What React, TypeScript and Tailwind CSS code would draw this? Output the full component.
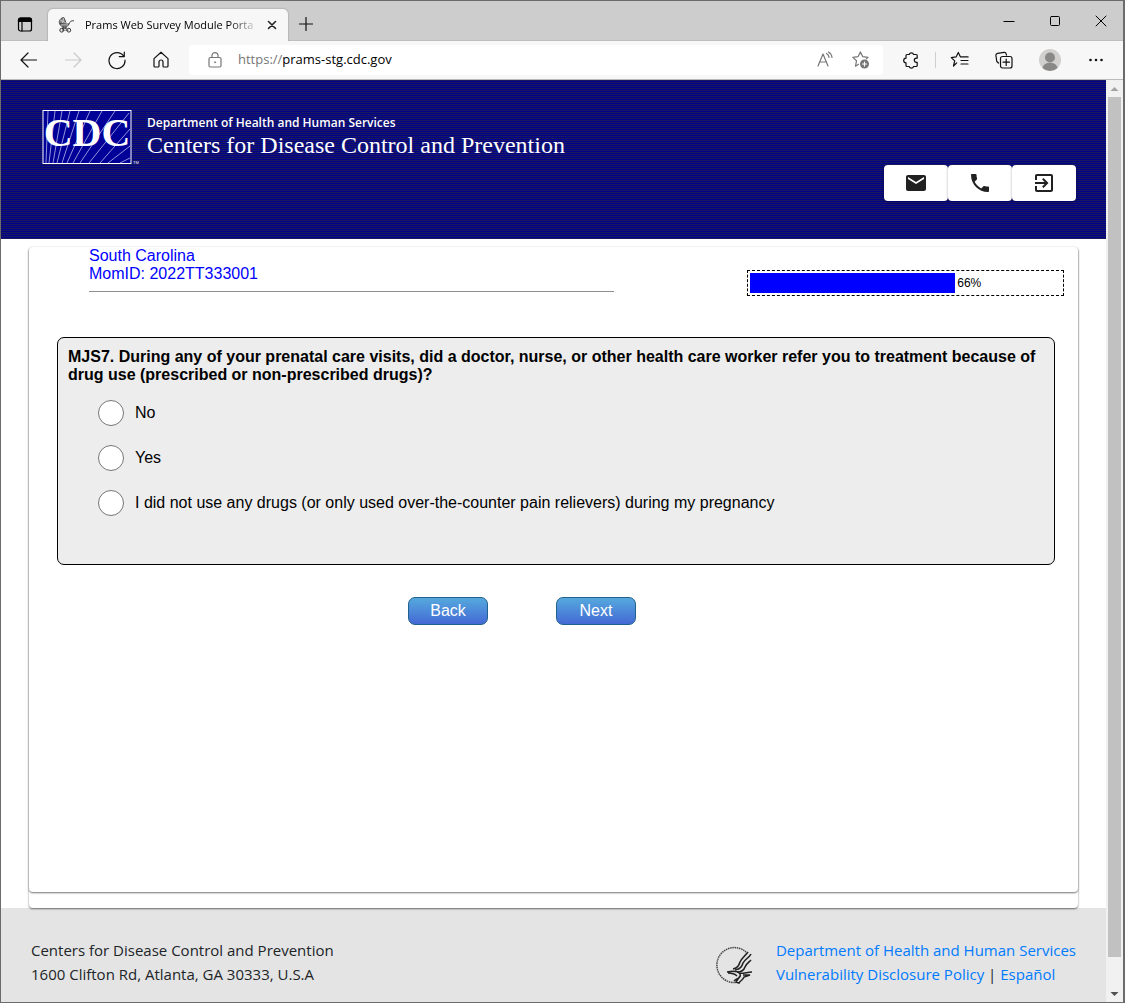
import React from "react";

const ui = 'font-["Open_Sans","Noto_Sans",sans-serif]';
const iconBtn = "flex h-8 w-11 items-center justify-center text-[#111]";

function Svg({ children, size = 20 }: { children: React.ReactNode; size?: number }) {
  return (
    <svg width={size} height={size} viewBox={`0 0 ${size} ${size}`} fill="none" stroke="currentColor" strokeWidth="1.2" strokeLinecap="round" strokeLinejoin="round" aria-hidden="true">
      {children}
    </svg>
  );
}

function TabStrip() {
  return (
    <div className="flex h-10 items-end border-b border-[#bebebe] bg-[#cdcdcd]">
      <button aria-label="Tab actions" className="flex h-8 w-[47px] items-center justify-center">
        <Svg>
          <rect x="3.500" y="4" width="13" height="13" rx="2" />
          <path d="M3.500 7.500V6a2 2 0 0 1 2-2h9a2 2 0 0 1 2 2v1.500z" fill="currentColor" />
          <path d="M7 8v9" />
        </Svg>
      </button>
      <div className="-mb-px flex h-8 w-60 items-center rounded-t-[5px] bg-[#f7f7f7] pl-[10px] shadow-[0_0_2px_rgba(0,0,0,0.35)] [clip-path:inset(-3px_-3px_0_-3px)]">
        <svg width="18" height="18" viewBox="0 0 18 18" fill="none" stroke="#333" aria-hidden="true">
          <path d="M1.500 7.500c-1-3 1.500-6 4.500-6l2 5.500z" fill="#888" strokeWidth=".8" />
          <path d="M6 1.500 4.500 7.200M2 4l6 3" stroke="#eee" strokeWidth=".6" />
          <path d="M1.500 8h9.500c1-2.500 2-3.500 5-3.200M2 8c.5 3.500 8 3.500 9 0M4 11l5 2M9 11l-5 2" strokeWidth=".9" />
          <path d="M2.300 9.500h8.400" stroke="#888" strokeWidth="1.300" />
          <circle cx="3.700" cy="14.200" r="1.900" />
          <circle cx="10.800" cy="14.200" r="1.900" />
          <path d="M3.700 14.200h7" strokeWidth=".7" />
        </svg>
        <span className="ml-[9px] w-[174px] text-[11px] whitespace-nowrap text-black [mask-image:linear-gradient(to_right,black_144px,transparent)]">
          Prams Web Survey Module Porta
        </span>
        <button aria-label="Close tab" className="ml-[3px] flex h-6 w-5 items-center justify-center text-[#222]">
          <Svg size={10}><path d="m1.500 1.500 7 7m0-7-7 7" strokeWidth="1.600" /></Svg>
        </button>
      </div>
      <button aria-label="New tab" className="ml-[6px] flex h-8 w-6 items-center justify-center text-[#111]">
        <Svg size={14}><path d="M7 .5v13M.5 7h13" /></Svg>
      </button>
      <div className="-mr-px ml-auto flex h-full items-center text-black">
        <button aria-label="Minimize" className="flex h-8 w-[46px] items-center justify-center"><Svg size={12}><path d="M1 6.500h10" strokeWidth="1" strokeLinecap="square" /></Svg></button>
        <button aria-label="Maximize" className="flex h-8 w-[46px] items-center justify-center"><Svg size={12}><rect x="1.500" y="1.500" width="9" height="9" rx="1" strokeWidth="1" /></Svg></button>
        <button aria-label="Close" className="flex h-8 w-[46px] items-center justify-center"><Svg size={12}><path d="m1 1 10 10M11 1 1 11" strokeWidth="1" /></Svg></button>
      </div>
    </div>
  );
}

function Toolbar() {
  return (
    <div className="flex h-[39px] items-center border-b border-[#bababa] bg-[#f7f7f7] pl-[6px]">
      <button aria-label="Back" className={iconBtn}><Svg><path d="M17.500 10h-15M9 3l-7 7 7 7" /></Svg></button>
      <button aria-label="Forward" disabled className="flex h-8 w-11 items-center justify-center text-[#c9c9c9]"><Svg><path d="M2.500 10h15M11 3l7 7-7 7" /></Svg></button>
      <button aria-label="Refresh" className={iconBtn}><Svg><path d="M16.600 6A8 8 0 1 0 18 10M17.300 2v4.600h-5" /></Svg></button>
      <button aria-label="Home" className={iconBtn}><Svg><path d="M3 8.600 10 2.200l7 6.400v7.400a1 1 0 0 1-1 1h-3a1 1 0 0 1-1-1v-4a2 2 0 0 0-4 0v4a1 1 0 0 1-1 1H4a1 1 0 0 1-1-1z" /></Svg></button>
      <div className="ml-[6px] flex h-[30px] flex-1 items-center rounded bg-white pr-1">
        <span className="flex w-[49px] justify-center pl-[2px] text-[#767676]">
          <Svg size={18}><rect x="3" y="6.500" width="12" height="9.500" rx="1.500" /><path d="M6 6.500V4.600a3 3 0 0 1 6 0v1.900" /><circle cx="9" cy="11.300" r=".7" fill="currentColor" strokeWidth=".5" /></Svg>
        </span>
        <p className="flex-1 text-[13px] text-black"><span className="text-[#767676]">https://</span>prams-stg.cdc.gov</p>
        <button aria-label="Read aloud" className="flex h-8 w-9 items-center justify-center text-[#767676]">
          <Svg><path d="m3 16 5-12 5 12M4.800 12h6.400M11.500 3.500c1.500.8 2.400 2 2.600 4M13.500 2c2 1.200 3.200 3 3.500 5.500" /></Svg>
        </button>
        <button aria-label="Add to favorites" className="flex h-8 w-9 items-center justify-center text-[#767676]">
          <Svg><path d="M7.500 14.300 4.500 16.200l1-5.400L1.800 7.400l5.200-.7L9.400 2l2.400 4.700 5.200.7-1.700 1.500" /><circle cx="13.500" cy="14" r="4.500" fill="#767676" stroke="none" /><path d="M13.500 12v4m-2-2h4" stroke="white" /></Svg>
        </button>
      </div>
      <button aria-label="Extensions" className="ml-2 flex h-8 w-10 items-center justify-center text-[#111]">
        <Svg><path d="M6 4.500h2.200a2.300 2.300 0 0 1 4.400 0h2.600a1 1 0 0 1 1 1v2.700h-.8a2 2 0 0 0 0 4.200h.8v3.100a1 1 0 0 1-1 1h-2.600a2.300 2.300 0 0 1-4.400 0H6a1 1 0 0 1-1-1v-2.700a2.300 2.300 0 0 1 0-4.600V5.500a1 1 0 0 1 1-1z" /></Svg>
      </button>
      <div className="mr-[2px] ml-1 h-4 w-px bg-[#cfcfcf]" />
      <button aria-label="Favorites" className={iconBtn}><Svg><path d="M6.700 12.800 3.500 16l1.200-5.100L1.300 7.600l4.800-.7L8.300 2.500l2.200 4.400h7.600M11 10.500h7M11 14h7" /></Svg></button>
      <button aria-label="Collections" className={iconBtn}><Svg><path d="M4.500 13 2.800 11.500l-.9-6a2 2 0 0 1 1.600-2.200l6.500-1a2 2 0 0 1 2.200 1.600l.3 1.300" /><rect x="6.500" y="6.500" width="11.500" height="11.500" rx="2" /><path d="M12.200 9v6.500M9 12.200h6.500" /></Svg></button>
      <button aria-label="Profile" className="flex h-8 w-12 items-center justify-center">
        <svg width="22" height="22" viewBox="0 0 22 22" aria-hidden="true"><circle cx="11" cy="11" r="11" fill="#d2d0ce" /><circle cx="11" cy="8.500" r="5" fill="#8a8886" /><path d="M3.500 19c1-7 14-7 15 0a11 11 0 0 1-15 0" fill="#8a8886" /></svg>
      </button>
      <button aria-label="Settings and more" className={iconBtn}><Svg><g fill="currentColor" stroke="none"><circle cx="4.500" cy="10" r="1.300" /><circle cx="10" cy="10" r="1.300" /><circle cx="15.500" cy="10" r="1.300" /></g></Svg></button>
      <span className="w-[5px]" />
    </div>
  );
}

function CdcLogo() {
  return (
    <svg width="98" height="56" viewBox="0 0 98 56" role="img" aria-label="CDC">
      <rect x="1" y=".5" width="88" height="53" fill="#000099" stroke="white" />
      <g stroke="#b9b9ea" strokeWidth=".8">
        <path d="M6 1 4 53M13 1 7 53M20 1 11 53M28 1 15 53M37 1 20 53M48 1 25 53M60 1 31 53M73 1 38 53M87 3 47 53M88 19 58 53M88 36 66 53M88 48 78 53" />
      </g>
      <text x="45" y="36" textAnchor="middle" fontFamily="Liberation Serif, serif" fontWeight="bold" fontSize="40" fill="white">CDC</text>
      <text x="91" y="54" fontFamily="Liberation Sans, sans-serif" fontSize="4" fill="white">TM</text>
    </svg>
  );
}

function HeaderButton({ label, d }: { label: string; d: string }) {
  return (
    <button aria-label={label} className="flex h-9 w-16 items-center justify-center rounded bg-white shadow-[0_1px_3px_rgba(0,0,0,0.3)]">
      <svg width="24" height="24" viewBox="0 0 24 24" fill="#212121" aria-hidden="true"><path d={d} /></svg>
    </button>
  );
}

function SiteHeader() {
  return (
    <header className="flex h-[159px] items-start justify-between bg-[repeating-linear-gradient(to_bottom,#19195f_0px,#19195f_1px,#000088_1px,#000088_2px)] pt-[30px] pr-[30px] pl-[41px] text-white">
      <div className="flex">
        <CdcLogo />
        <div className="ml-[7px] pt-[5px] whitespace-nowrap">
          <p className='font-["Open_Sans",sans-serif] text-[12px] leading-4 font-semibold'>Department of Health and Human Services</p>
          <p className='font-["Liberation_Serif",serif] text-[24px] leading-7'>Centers for Disease Control and Prevention</p>
        </div>
      </div>
      <nav aria-label="Contact and exit" className="mt-[55px] flex">
        <HeaderButton label="Email" d="M20 4H4c-1.100 0-2 .9-2 2v12c0 1.100.9 2 2 2h16c1.100 0 2-.9 2-2V6c0-1.100-.9-2-2-2zm0 4-8 5-8-5V6l8 5 8-5v2z" />
        <HeaderButton label="Phone" d="M6.620 10.790c1.440 2.830 3.760 5.140 6.590 6.590l2.200-2.200c.27-.27.67-.36 1.020-.24 1.120.37 2.330.57 3.570.57.55 0 1 .45 1 1V20c0 .55-.45 1-1 1-9.390 0-17-7.610-17-17 0-.55.45-1 1-1h3.500c.55 0 1 .45 1 1 0 1.250.2 2.450.57 3.570.11.35.03.74-.25 1.020l-2.200 2.200z" />
        <HeaderButton label="Exit" d="M10.090 15.590 11.500 17l5-5-5-5-1.410 1.410L12.670 11H3v2h9.670l-2.580 2.590zM19 3H5c-1.110 0-2 .9-2 2v4h2V5h14v14H5v-4H3v4c0 1.100.89 2 2 2h14c1.100 0 2-.9 2-2V5c0-1.100-.9-2-2-2z" />
      </nav>
    </header>
  );
}

const answers = [
  "No",
  "Yes",
  "I did not use any drugs (or only used over-the-counter pain relievers) during my pregnancy",
];
const progress = 66;
const cardShadow = "rounded bg-white shadow-[0_1px_2px_rgba(0,0,0,0.55)]";
const navButton =
  "h-7 w-20 rounded-[7px] border border-[#1f628d] bg-linear-to-b from-[#56a8dd] to-[#4569d4] text-[16px] leading-6 text-white";

function Survey() {
  return (
    <main className="relative z-10 flex flex-1 flex-col px-7 pt-2">
      <div className={`flex flex-1 flex-col pb-4 ${cardShadow}`}>
        <form className={`flex-1 pr-[14px] pl-7 ${cardShadow}`} onSubmit={(e) => e.preventDefault()}>
          <div className="flex items-start justify-between pl-8">
            <div className="w-[525px] border-b border-[#8f8f8f] pb-2 text-[16px] leading-[18px] text-[#0000ff]">
              <p>South Carolina</p>
              <p>MomID: 2022TT333001</p>
            </div>
            <div role="progressbar" aria-label="Survey progress" aria-valuenow={progress} className="mt-[23px] flex h-[26px] w-[317px] items-center border border-dashed border-black p-0.5">
              <div className="h-5 bg-[#0000ff]" style={{ width: `${progress}%` }} />
              <span className="ml-0.5 text-[12px]">{progress}%</span>
            </div>
          </div>
          <fieldset className="mt-[41px] mr-[9px] rounded-[7px] border border-black bg-[#ededed] px-[10px] pb-12">
            <legend className="float-left mt-[10px] mb-[16px] w-full text-[16px] leading-[18px] font-bold">
              MJS7. During any of your prenatal care visits, did a doctor, nurse, or other health care worker refer you to treatment because of drug use (prescribed or non-prescribed drugs)?
            </legend>
            <div className="clear-both flex flex-col gap-[19px] pl-[30px]">
              {answers.map((a, i) => (
                <label key={a} htmlFor={`answer-${i}`} className="flex items-center gap-[11px] text-[16px] leading-[18px]">
                  <input id={`answer-${i}`} type="radio" name="answer" className="size-[26px] appearance-none rounded-full border border-[#767676] bg-white checked:bg-blue-700" />
                  <span>{a}</span>
                </label>
              ))}
            </div>
          </fieldset>
          <div className="mt-8 flex justify-center gap-[68px] pr-[77px]">
            <button type="button" className={navButton}>Back</button>
            <button type="submit" className={navButton}>Next</button>
          </div>
        </form>
      </div>
    </main>
  );
}

function HhsSeal() {
  return (
    <svg width="40" height="40" viewBox="0 0 40 40" fill="none" aria-hidden="true">
      <path d="M31 6A17.500 17.500 0 1 0 21 36.500" stroke="#444" strokeWidth="1.500" strokeDasharray="1.500 .7" />
      <path d="M36 8c-2 4-6 5-8 9-1 3-2 6-8 7" stroke="#222" strokeWidth="1.600" />
      <path d="M33 6c-3 4-6 6-8 10-1 3-2 6-7 7" stroke="#222" strokeWidth="1.600" />
      <path d="M36 14c-3 3-5 4-6 7-1 3-3 5-8 5" stroke="#222" strokeWidth="1.600" />
      <path d="M12 26c5-1 11-1 13 2 2 4-3 4-6 7M13 27c4 0 7 1 9 3M24 27c4 1 8-1 13-1M28 29h7l-6 2c-1 3-3 3-5 6l-3-1 4-6" stroke="#222" strokeWidth="1.500" />
    </svg>
  );
}

function Footer() {
  return (
    <footer className={`flex h-[94px] items-start justify-between bg-[#e4e4e4] px-[30px] pt-[30px] text-[15px] leading-6 text-[#212529] ${ui}`}>
      <address className="not-italic">
        Centers for Disease Control and Prevention
        <br />
        1600 Clifton Rd, Atlanta, GA 30333, U.S.A
      </address>
      <div className="flex items-end gap-[21px]">
        <HhsSeal />
        <div className="text-[#007bff]">
          <a href="#hhs" className="block">Department of Health and Human Services</a>
          <a href="#policy">Vulnerability Disclosure Policy</a> <span className="text-[#212529]">|</span> <a href="#es" lang="es">Español</a>
        </div>
      </div>
    </footer>
  );
}

function Scrollbar() {
  return (
    <div className="flex w-[17px] flex-col items-center bg-[#f1f1f1]" aria-hidden="true">
      <svg width="17" height="17" viewBox="0 0 17 17"><path d="M4.500 11h8l-4-4z" fill="#a3a3a3" /></svg>
      <div className="w-[13px] flex-1 bg-[#c1c1c1]" />
      <div className="h-7" />
      <svg width="17" height="17" viewBox="0 0 17 17"><path d="M4.500 7h8l-4 4z" fill="#505050" /></svg>
    </div>
  );
}

export default function App() {
  return (
    <div className='flex min-h-screen flex-col border border-r-2 border-[#6b6b6b] bg-white font-["Liberation_Sans",Arial,sans-serif] text-black'>
      <div className={ui}>
        <TabStrip />
        <Toolbar />
      </div>
      <div className="flex flex-1">
        <div className="flex min-w-0 flex-1 flex-col">
          <SiteHeader />
          <Survey />
          <Footer />
        </div>
        <Scrollbar />
      </div>
    </div>
  );
}
